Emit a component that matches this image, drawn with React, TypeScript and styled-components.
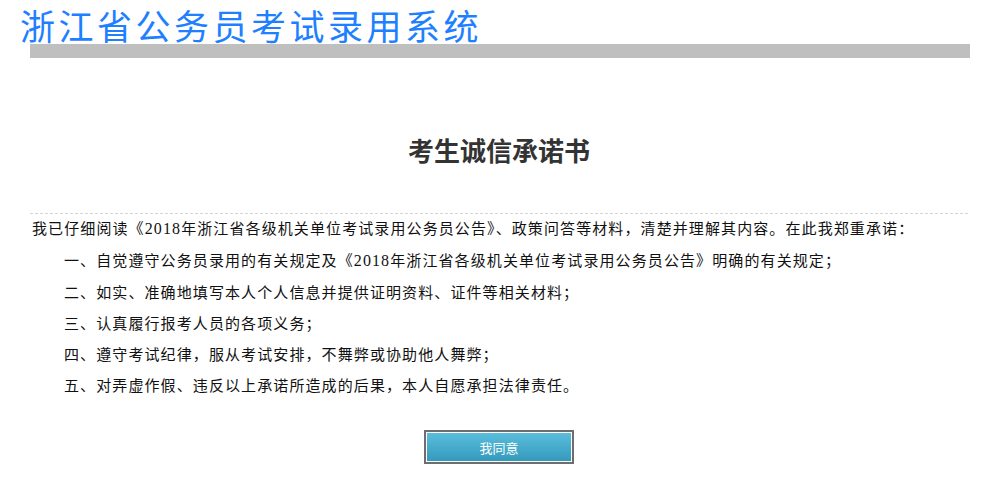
import styled, { createGlobalStyle } from "styled-components";

const GlobalStyle = createGlobalStyle`
  body {
    margin: 0;
    background: #fff;
    font-family: "Noto Sans CJK SC", sans-serif;
  }
`;

function Notice() {
  return (
    <>
      《<Num>2018</Num>年浙江省各级机关单位考试录用公务员公告》
    </>
  );
}

export default function App() {
  return (
    <>
      <GlobalStyle />
      <Header>
        <Title>浙江省公务员考试录用系统</Title>
        <Bar />
      </Header>
      <Main>
        <Heading>考生诚信承诺书</Heading>
        <Content>
          <Line>
            我已仔细阅读<Notice />、政策问答等材料，清楚并理解其内容。在此我郑重承诺：
          </Line>
          <Line indent>一、自觉遵守公务员录用的有关规定及<Notice />明确的有关规定；</Line>
          <Line indent>二、如实、准确地填写本人个人信息并提供证明资料、证件等相关材料；</Line>
          <Line indent>三、认真履行报考人员的各项义务；</Line>
          <Line indent>四、遵守考试纪律，服从考试安排，不舞弊或协助他人舞弊；</Line>
          <Line indent>五、对弄虚作假、违反以上承诺所造成的后果，本人自愿承担法律责任。</Line>
          <Actions>
            <AgreeButton type="button">我同意</AgreeButton>
          </Actions>
        </Content>
      </Main>
    </>
  );
}

const Header = styled.div`
  display: flex;
  flex-direction: column;
`;

const Title = styled.div`
  height: 44px;
  padding-left: 20px;
  overflow: hidden;
  font-size: 35px;
  line-height: 50px;
  letter-spacing: 3.5px;
  color: #1e80ff;
`;

const Bar = styled.div`
  height: 14px;
  margin: 0 18px 0 30px;
  background: #bfbfbf;
`;

const Main = styled.div`
  margin: 0 20px 0 30px;
`;

const Heading = styled.h1`
  height: 128px;
  margin: 0;
  padding-top: 27px;
  display: flex;
  align-items: center;
  justify-content: center;
  font-size: 26px;
  font-weight: 700;
  color: #333;
`;

const Content = styled.div`
  border-top: 1px dashed #d4d4d4;
`;

const Line = styled.p<{ indent?: boolean }>`
  margin: 0;
  padding: 0 0 4px ${(p) => (p.indent ? "34px" : "2px")};
  font-size: 15px;
  line-height: 27px;
  letter-spacing: 1.1px;
  color: #111;
  white-space: nowrap;
`;

const Num = styled.span`
  font-family: "Liberation Serif", serif;
  font-size: 16px;
`;

const Actions = styled.div`
  display: flex;
  justify-content: center;
  padding-top: 28px;
`;

const AgreeButton = styled.button`
  width: 150px;
  height: 34px;
  padding: 0;
  border: 2px solid #6e6e6e;
  box-shadow: inset 0 0 0 1px #fff;
  background: linear-gradient(#5bbedd, #3399bb);
  color: #fff;
  font-family: "Noto Sans CJK SC", sans-serif;
  font-size: 13px;
  cursor: pointer;
`;
